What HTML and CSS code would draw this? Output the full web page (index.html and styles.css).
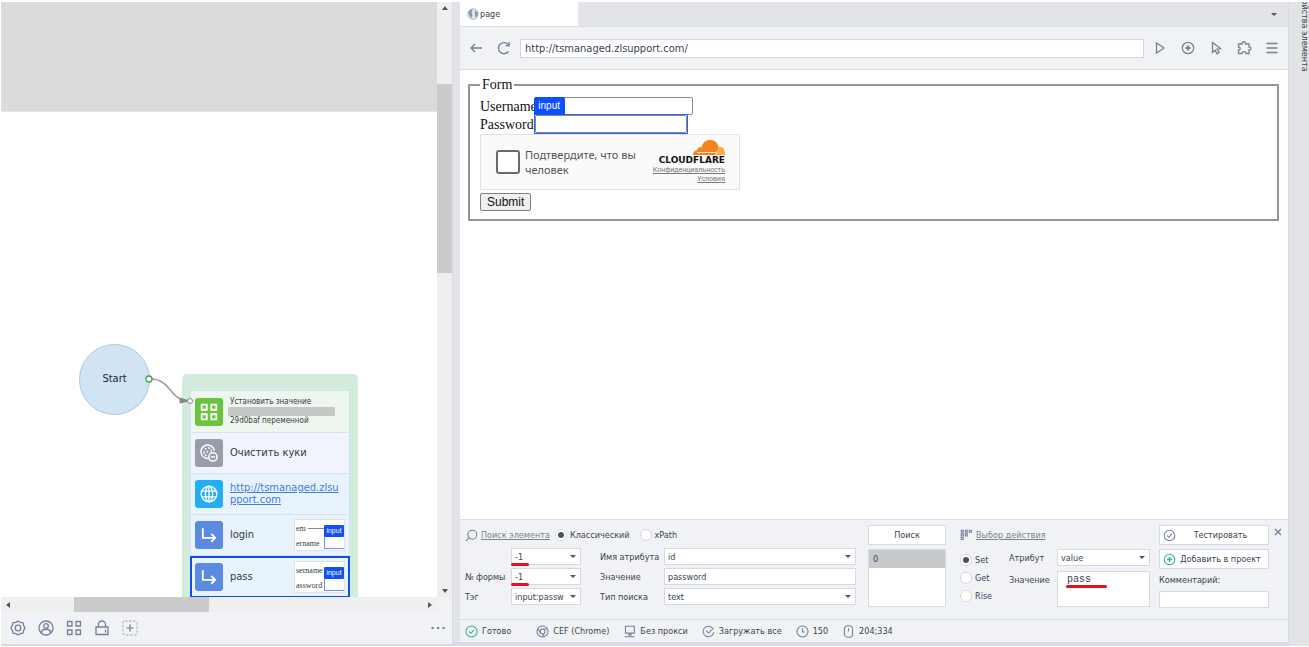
FILE: index.html
```html
<!DOCTYPE html>
<html lang="ru">
<head>
<meta charset="utf-8">
<title>page</title>
<link rel="stylesheet" href="styles.css">
</head>
<body>
<svg class="defs" aria-hidden="true">
  <symbol id="i-grid" viewBox="0 0 16 16"><path d="M1.5 1.5h4.5v4.5h-4.5zM10 1.5h4.5v4.5h-4.5zM1.5 10h4.5v4.5h-4.5zM10 10h4.5v4.5h-4.5z"/></symbol>
  <symbol id="i-turn" viewBox="0 0 16 16"><path d="M2.5 2v8.500h11M10 7l3.500 3.500L10 14"/></symbol>
</svg>
<div class="app">
  <section class="flow">
    <div class="canvas">
      <div class="canvas-outside"></div>
      <div class="start">Start</div>
      <svg class="wire" viewBox="0 0 60 40" aria-hidden="true"><path d="M8 8C28 8 27 30 46 30" fill="none" stroke="#9b9b9b" stroke-width="1.500"/><path d="M37 27l9 3-9 2z" fill="#888" stroke="#888" stroke-width="1"/><circle cx="6" cy="8" r="3" fill="#fff" stroke="#43a047" stroke-width="1.300"/></svg>
      <div class="group">
        <span class="port"></span>
        <ul class="steps">
          <li class="step step-set"><span class="tile green"><svg><use href="#i-grid"/></svg></span><span class="small">Установить значение<span class="mask"></span>29d0baf переменной</span></li>
          <li class="step step-cookie"><span class="tile grey"><svg viewBox="0 0 16 16"><path d="M12.800 6A6 6 0 1 0 7.500 12.800"/><circle cx="11.500" cy="11.500" r="3.700"/><path d="M9.800 11.500h3.400"/><path d="M4.300 4.300h1.300M7.500 3.500h1.300M3 7.500h1.300M6 6.800h1.300M4.500 10h1.300M9.300 5.800h1.300" stroke-width="1.700"/></svg></span><span>Очистить куки</span></li>
          <li class="step"><span class="tile sky"><svg viewBox="0 0 16 16"><circle cx="8" cy="8" r="7"/><ellipse cx="8" cy="8" rx="3.200" ry="7"/><path d="M8 1v14M1.500 5.500h13M1.500 10.500h13"/></svg></span><a href="#site">http://tsmanaged.zlsu<br>pport.com</a></li>
          <li class="step"><span class="tile blue"><svg><use href="#i-turn"/></svg></span><span>login</span><span class="thumb"><span class="thumb-line">em<i class="dash"></i></span><span class="thumb-line">ername</span><b class="chip">input</b><i class="thumb-box"></i></span></li>
          <li class="step selected"><span class="tile blue"><svg><use href="#i-turn"/></svg></span><span>pass</span><span class="thumb"><span class="thumb-line">sername</span><span class="thumb-line">assword</span><b class="chip">input</b><i class="thumb-box"></i></span></li>
        </ul>
      </div>
    </div>
    <div class="vbar"><i class="arr up"></i><span class="vthumb"></span><i class="arr down"></i></div>
    <div class="hbar"><i class="arr left"></i><span class="hthumb"></span><i class="arr right"></i></div>
    <div class="tools">
      <button aria-label="Настройки"><svg viewBox="0 0 16 16"><path d="M8 1l2.200 1.300 2.700.4.700 2.600L15 8l-1.400 2.500-.7 2.700-2.700.5L8 15l-2.200-1.300-2.700-.5-.7-2.700L1 8l1.400-2.700.7-2.600 2.700-.4z"/><circle cx="8" cy="8" r="2.800"/></svg></button>
      <button aria-label="Профиль"><svg viewBox="0 0 16 16"><circle cx="8" cy="8" r="7"/><circle cx="8" cy="6" r="2.300"/><path d="M3.500 13c0-5 9-5 9 0"/></svg></button>
      <button aria-label="Блоки"><svg><use href="#i-grid"/></svg></button>
      <button aria-label="Замок"><svg viewBox="0 0 16 16"><path d="M2 7h12v7.500H2zM4.500 7V4.500a3.500 3.500 0 0 1 7 0V7M11.500 9.500v3"/></svg></button>
      <button class="faint" aria-label="Добавить"><svg viewBox="0 0 16 16"><rect x="1" y="1" width="14" height="14" rx="2" stroke-dasharray="2.500 1.500"/><path d="M8 4.500v7M4.500 8h7" stroke="#8a98ad" stroke-width="1.600"/></svg></button>
      <button class="more" aria-label="Ещё"><svg viewBox="0 0 16 16"><path d="M1.500 8h2.200M7 8h2.200M12.500 8h2.200" stroke-width="2.200"/></svg></button>
    </div>
  </section>

  <main class="browser">
    <div class="tabs">
      <div class="tab"><svg viewBox="0 0 12 12"><circle cx="6" cy="6" r="5.200" fill="#e2e7ef" stroke="#a9b5c8"/><path d="M1.500 4l2.500-2.500 1.500 1-1 2.500 1 2-1 3-2-2zM8 2.500l2.500 2v3l-2 2-.5-3z" fill="#8494b0" stroke="none"/></svg>page</div>
      <i class="caret tab-caret"></i>
    </div>
    <div class="nav">
      <button aria-label="Назад"><svg viewBox="0 0 16 16"><path d="M14 8H3M7 4L3 8l4 4"/></svg></button>
      <button aria-label="Обновить"><svg viewBox="0 0 16 16"><path d="M12.500 11.500A5.600 5.600 0 1 1 12.500 4.800M13.200 2v3.700H9.500"/></svg></button>
      <input class="url" aria-label="Адрес" value="http://tsmanaged.zlsupport.com/">
      <button aria-label="Запуск"><svg viewBox="0 0 16 16"><path d="M4.500 3v10l7.500-5z"/></svg></button>
      <button aria-label="Добавить"><svg viewBox="0 0 16 16"><circle cx="8" cy="8" r="5.700"/><path d="M8 5.500v5M5.500 8h5" stroke-width="1.800"/></svg></button>
      <button aria-label="Выбор"><svg viewBox="0 0 16 16"><path d="M4.500 2.500l8 6-3.500.8 2 3.200-1.800 1.300-2.200-3.500-2.500 2z"/></svg></button>
      <button aria-label="Расширения"><svg viewBox="0 0 16 16"><path d="M2.500 4h3.500c-.5-3 4-3 3.500 0h3.500v3c2.500-.5 2.500 3.500 0 3v3.500h-3c0-2.500-4-2.500-4 0H2.500v-3.500c2.300 0 2.300-3 0-3z"/></svg></button>
      <button aria-label="Меню"><svg viewBox="0 0 16 16"><path d="M2.500 3.500h11M2.500 8h11M2.500 12.500h11"/></svg></button>
    </div>
    <div class="page">
      <form>
        <fieldset>
          <legend>Form</legend>
          <div class="line"><label for="u">Username</label><input id="u"></div>
          <div class="line pw"><label for="p">Password</label><span class="hl"><b class="tag">input</b><input id="p" type="password"></span></div>
          <div class="captcha">
            <input type="checkbox" id="human"><label for="human">Подтвердите, что вы человек</label>
            <div class="cf">
              <svg viewBox="0 0 32 15" aria-hidden="true"><path d="M0 15c0-3 1.500-4.500 4-4.500 0-3 2.500-4 4.500-3C10 2 13 0 17 0c5 0 8 3.500 8.500 7L24 15z" fill="#f6821f"/><path d="M23 15l1.500-4c.5-2 1-4 2-4.500 3.500 0 5.500 3 5.500 8.500z" fill="#fbad41"/><path d="M4 12.500h19M23 15l1-4" stroke="#fff" stroke-width=".8"/></svg>
              <strong>CLOUDFLARE</strong>
              <a href="#privacy">Конфиденциальность</a>
              <a href="#terms">Условия</a>
            </div>
          </div>
          <button type="button" class="submit">Submit</button>
        </fieldset>
      </form>
    </div>

    <div class="panel">
      <div class="search">
        <div class="head">
          <svg class="ico" viewBox="0 0 16 16"><circle cx="9" cy="7" r="5.500"/><path d="M5 11l-4 4"/></svg>
          <a href="#find">Поиск элемента</a>
          <label><input type="radio" name="mode" checked>Классический</label>
          <label class="xp"><input type="radio" name="mode">xPath</label>
        </div>
        <span></span>
        <span class="pick"><select aria-label="Номер"><option>-1</option></select><i class="red"></i></span>
        <label class="mid" for="an">Имя атрибута</label>
        <span class="pick"><select id="an"><option>id</option></select></span>
        <label for="fn">№ формы</label>
        <span class="pick"><select id="fn"><option>-1</option></select><i class="red"></i></span>
        <label class="mid" for="av">Значение</label>
        <input id="av" class="box" value="password">
        <label for="tg">Тэг</label>
        <span class="pick"><select id="tg"><option>input:password</option></select></span>
        <label class="mid" for="st">Тип поиска</label>
        <span class="pick"><select id="st"><option>text</option></select></span>
      </div>
      <div class="found">
        <button class="btn">Поиск</button>
        <ul class="results"><li>0</li></ul>
      </div>
      <div class="action">
        <div class="head">
          <svg class="ico" viewBox="0 0 16 16"><path d="M1.500 1.500h2.500v2.500h-2.500zM6.500 1.500h2.500v2.500h-2.500zM11.500 1.500h2.500v2.500h-2.500zM1.500 6h2.500v2.500h-2.500zM6.500 6h2.500v2.500h-2.500zM1.500 10.500h2.500v2.500h-2.500z"/></svg>
          <a href="#action">Выбор действия</a>
        </div>
        <div class="action-body">
          <div class="radios">
            <label><input type="radio" name="act" checked>Set</label>
            <label><input type="radio" name="act">Get</label>
            <label><input type="radio" name="act">Rise</label>
          </div>
          <div class="fields">
            <label for="at">Атрибут</label>
            <span class="pick"><select id="at"><option>value</option></select></span>
            <label for="vl">Значение</label>
            <span class="pick"><textarea id="vl">pass</textarea><i class="red red-long"></i></span>
          </div>
        </div>
      </div>
      <div class="run">
        <button class="btn with-icon"><svg class="ico" viewBox="0 0 16 16"><circle cx="8" cy="8" r="6.500"/><path d="M5 8l2.300 2.200L11 6"/></svg><span>Тестировать</span></button>
        <button class="btn with-icon"><svg class="ico ok" viewBox="0 0 16 16"><circle cx="8" cy="8" r="6.500"/><path d="M8 5v6M5 8h6" stroke-width="1.800"/></svg><span>Добавить в проект</span></button>
        <label for="cm">Комментарий:</label>
        <input id="cm" class="box">
      </div>
      <button class="close" aria-label="Закрыть"><svg viewBox="0 0 8 8"><path d="M1 1l6 6M7 1L1 7"/></svg></button>
    </div>
    <div class="status">
      <span><svg class="ico ok" viewBox="0 0 16 16"><circle cx="8" cy="8" r="6.800"/><path d="M5 8l2.300 2.200L11 6"/></svg>Готово</span>
      <span class="gap-wide"><svg class="ico" viewBox="0 0 16 16"><circle cx="8" cy="8" r="6.800"/><circle cx="8" cy="8" r="3"/><path d="M8 5h6M5.400 9.500L2.500 4.500M10.600 9.500L8 14.500"/></svg>CEF (Chrome)</span>
      <span><svg class="ico" viewBox="0 0 16 16"><path d="M3 1.500h11v8.500H3zM8.500 10v4M2 14.500h12M6 12h5"/></svg>Без прокси</span>
      <span><svg class="ico" viewBox="0 0 16 16"><path d="M13 4A6.500 6.500 0 1 0 14.300 9M5 7l3 3 6-6"/></svg>Загружать все</span>
      <span><svg class="ico" viewBox="0 0 16 16"><circle cx="8" cy="8" r="6.800"/><path d="M8 4v4.500h3"/></svg>150</span>
      <span class="mouse"><svg class="ico" viewBox="0 0 16 16"><rect x="3" y="1" width="10" height="14" rx="4"/><path d="M8 4v4"/></svg>204;334</span>
    </div>
  </main>
  <aside class="side"><span>Свойства элемента</span></aside>
</div>
</body>
</html>
```
FILE: styles.css
```css
* { box-sizing: border-box; }
body { margin: 0; background: #fff; font: 9px/14px "DejaVu Sans Condensed", "DejaVu Sans", sans-serif; color: #3b4350; }
ul { list-style: none; margin: 0; padding: 0; }
button, input, select, textarea { font: inherit; color: inherit; margin: 0; border-radius: 0; }
svg { fill: none; stroke: currentColor; display: block; stroke-width: 1.3; }
.defs { position: absolute; width: 0; height: 0; }

.app { display: grid; grid-template-columns: 452fr 836fr 20px; height: 100vh; padding: 2px 0 1px 1px; }

.flow { display: grid; grid-template: 1fr 15px 32px / 1fr 15px; min-width: 0; background: #f0f2f6; border: 1px solid #d8dbe3; border-width: 0 1px 2px 0; }
.canvas { position: relative; overflow: hidden; background: #fff; }
.canvas-outside { height: 110px; background: #dbdbdb; border-bottom: 1px solid #e6e6e6; }
.start { position: absolute; left: 78px; top: 342px; width: 71px; height: 71px; border: 1px solid #a9c8e8; border-radius: 50%; background: #d1e4f4; display: flex; align-items: center; justify-content: center; padding-bottom: 2px; font-size: 11px; color: #20262e; }
.wire { position: absolute; left: 142px; top: 369px; width: 60px; height: 40px; z-index: 1; }
.group { position: absolute; left: 181px; top: 372px; width: 176px; padding: 16px 8px 20px; border-radius: 5px; background: #d3ebdd; }
.port { position: absolute; left: 5px; top: 24px; width: 6px; height: 6px; border: 1px solid #888; border-radius: 50%; background: #fff; z-index: 2; }
.steps { border: 1px solid #cfe4fb; border-bottom: 0; border-radius: 4px 4px 0 0; background: #e8f3fe; }
.step { display: flex; align-items: center; gap: 7px; height: 41px; padding: 0 4px; border-bottom: 1px solid #cfe4fb; font-size: 11px; line-height: 12px; color: #333a44; }
.step-set { height: 42px; background: #edf6ef; }
.step-cookie { background: #f1f4fc; }
.step a { color: #3c7cdb; }
.step.selected { margin: 0 -1px; padding: 0 3px; height: 42px; border: 2px solid #0f50e0; }
.tile { flex: none; display: grid; place-items: center; width: 28px; height: 28px; border-radius: 3px; color: #fff; }
.tile svg { width: 18px; height: 18px; stroke-width: 1.6; }
.green { background: #69c540; }
.grey { background: #989ea9; }
.grey svg { stroke-width: 1.3; }
.sky { background: #23adf3; }
.sky svg { stroke-width: 1.2; }
.blue { background: #5b8be0; }
.small { font-size: 8px; line-height: 10px; }
.mask { display: block; width: 107px; height: 9px; margin-left: -2px; background: #c3c8c5; }
.thumb { position: relative; margin-left: auto; width: 51px; height: 32px; border: 1px solid #dfe2e6; background: #fff; overflow: hidden; font: 8px/15px "Liberation Serif", serif; padding: 1px; }
.thumb-line { display: flex; align-items: center; gap: 2px; }
.dash { width: 17px; border-top: 1px solid #888; }
.chip { position: absolute; left: 29px; top: 5px; width: 20px; height: 12px; background: #1050f5; color: #fff; font: 7px/12px "Liberation Sans", sans-serif; text-align: center; border-radius: 1px; }
.thumb-box { position: absolute; left: 29px; top: 17px; width: 20px; height: 12px; border: 1px solid #6f8fe8; border-width: 0 0 1px 1px; background: #fff; }
.vbar, .hbar { display: flex; align-items: center; justify-content: space-between; background: #efefef; }
.vbar { flex-direction: column; padding: 4px 0; }
.hbar { padding: 0 5px; }
.vthumb { width: 15px; height: 189px; margin-bottom: 242px; background: #cbcbcb; }
.hthumb { width: 135px; height: 15px; margin-right: 156px; background: #cbcbcb; }
.arr { border: 3px solid transparent; }
.up { border-top-width: 0; border-bottom: 4px solid #555; }
.down { border-bottom-width: 0; border-top: 4px solid #555; }
.left { border-left-width: 0; border-right: 4px solid #555; }
.right { border-right-width: 0; border-left: 4px solid #555; }
.tools { grid-column: 1 / 3; display: flex; align-items: center; gap: 12px; padding: 0 6px 0 9px; }
.tools button, .nav button, .close { border: 0; background: none; padding: 0; color: #748196; }
.tools svg { width: 16px; height: 16px; }
.tools .faint { color: #b4bfd0; }
.tools .more { margin-left: auto; }

.browser { display: flex; flex-direction: column; min-width: 0; padding-left: 7px; border: 1px solid #d8dbe3; border-width: 0 1px 4px 0; background: linear-gradient(90deg, #e2e4ea 7px, #f0f2f6 7px); }
.tabs { display: flex; align-items: center; justify-content: space-between; height: 24px; background: #e3e4e8; padding-right: 11px; }
.tab { display: flex; align-items: center; gap: 1px; width: 118px; height: 24px; padding-left: 7px; background: #fff; }
.tab svg { width: 12px; height: 12px; stroke-width: 1; }
.caret { border: 3px solid transparent; border-top-color: #555; border-bottom: 0; }
.nav { display: flex; align-items: center; gap: 12px; height: 44px; padding: 0 8px; border-bottom: 1px solid #d5dae3; border-top: 1px solid #d8dde5; }
.nav svg { width: 16px; height: 16px; }
.url { flex: 1; min-width: 0; height: 19px; border: 1px solid #d2d6de; background: #fff; padding: 0 4px; font-size: 11px; margin: 0 -4px 0 -4px; }

.page { flex: 1; background: #fff; padding: 7px 9px 0 8px; border-bottom: 1px solid #dcdfe6; font: 14px/17px "Liberation Serif", serif; color: #111; }
fieldset { margin: 0; padding: 5px 10px 8px; border: 2px solid #959595; min-width: 0; }
legend { padding: 0 2px; line-height: 15px; }
.line { display: flex; align-items: center; height: 18px; }
.line input { width: 152px; height: 18px; border: 1px solid #888; border-radius: 2px; background: #fff; }
.line #u { width: 156px; }
.hl { position: relative; display: flex; border: 1px solid #2c62f0; }
.tag { position: absolute; left: -1px; top: -18px; width: 31px; height: 18px; border-radius: 2px 2px 0 0; background: #0b50ff; color: #fff; font: 10px/17px "Liberation Sans", sans-serif; text-align: center; }
.captcha { display: flex; align-items: center; gap: 5px; width: 260px; height: 56px; margin-top: 1px; padding: 0 14px 0 15px; border: 1px solid #e2e2e2; background: #fafafa; font: 11px/15px "Noto Sans", sans-serif; color: #555; }
.captcha input { appearance: none; flex: none; width: 24px; height: 24px; border: 2px solid #6b6b6b; border-radius: 3px; background: #fff; }
.captcha > label { flex: 1; }
.cf { display: flex; flex-direction: column; align-items: flex-end; width: 70px; font: 7px/9px Roboto, sans-serif; }
.cf svg { width: 32px; height: 15px; stroke: none; }
.cf strong { font: bold 9px/11px "DejaVu Sans", sans-serif; color: #111; }
.cf a { color: #777; }
.submit { display: block; height: 18px; margin-top: 3px; padding: 0 6px; border: 1px solid #808080; border-radius: 2px; background: #efefef; color: #111; font: 12px/16px "Liberation Sans", sans-serif; }

.panel { display: flex; gap: 12px; height: 100px; padding: 5px 6px 0 5px; border-bottom: 1px solid #d8dce4; }
.head { display: flex; align-items: center; gap: 3px; height: 20px; }
.head a { color: #7d838d; }
.head label, .radios label { display: flex; align-items: center; gap: 3px; }
.head a + label { margin-left: 2px; }
.head .xp { margin-left: 7px; }
.ico { flex: none; width: 13px; height: 13px; color: #748196; }
.ok { color: #2fb38c; }
input[type="radio"] { appearance: none; display: grid; place-items: center; width: 12px; height: 12px; border: 1px solid #d5d9e0; border-radius: 50%; background: #fff; }
input[type="radio"]:checked::before { content: ""; width: 6px; height: 6px; border-radius: 50%; background: #4c525c; }
.search { flex: 1; min-width: 0; display: grid; grid-template-columns: 46px 70px 83px minmax(0, 1fr); grid-template-rows: 20px repeat(3, 17px); row-gap: 3px; align-items: center; align-content: start; white-space: nowrap; }
.search .head { grid-column: 1 / 5; }
.mid { padding-left: 19px; }
.pick { position: relative; display: block; }
.pick select, .box, .pick textarea { display: block; width: 100%; height: 17px; border: 1px solid #d5d9e1; background: #fff; padding: 0 3px; line-height: 14px; }
.pick select { appearance: none; padding-right: 16px; }
.pick:has(select)::after { content: ""; position: absolute; right: 5px; top: 7px; border: 3px solid transparent; border-top-color: #555; border-bottom: 0; }
.red { position: absolute; left: 0; top: 15px; width: 18px; height: 3px; border-radius: 2px; background: #e8101c; z-index: 1; }
.found { width: 78px; display: flex; flex-direction: column; gap: 4px; }
.btn { width: 100%; height: 20px; border: 1px solid #d5d9e1; background: #fff; padding: 0; text-align: center; }
.results { height: 58px; border: 1px solid #d5d9e1; background: #fff; }
.results li { height: 18px; padding-left: 4px; background: #c8c9cc; line-height: 18px; }
.action { width: 192px; padding-left: 2px; }
.action-body { display: grid; grid-template-columns: 49px 1fr; margin-top: 4px; }
.radios { display: flex; flex-direction: column; gap: 4px; padding-top: 4px; }
.fields { display: grid; grid-template-columns: 48px 1fr; row-gap: 5px; align-items: start; }
.fields label { padding-top: 2px; }
.pick textarea { height: 36px; padding: 2px 9px; resize: none; font: 10px/12px "Liberation Mono", monospace; overflow: hidden; }
.red-long { left: 9px; top: 14px; width: 41px; }
.run { width: 110px; margin-left: -3px; display: flex; flex-direction: column; gap: 4px; }
.with-icon { display: flex; align-items: center; padding: 0 3px; white-space: nowrap; }
.with-icon span { flex: 1; }
.close { align-self: flex-start; margin: 3px 0 0 -7px; }
.close svg { width: 8px; height: 8px; }
.status { display: flex; align-items: center; gap: 14px; height: 22px; padding-left: 5px; white-space: nowrap; }
.status span { display: flex; align-items: center; gap: 4px; }
.status .gap-wide { margin-left: 11px; }

.side { display: flex; flex-direction: column; background: #e2e3e7; overflow: hidden; }
.side span { display: flex; justify-content: flex-end; height: 70px; margin-left: 12px; writing-mode: vertical-rl; white-space: nowrap; line-height: 8px; }
```
